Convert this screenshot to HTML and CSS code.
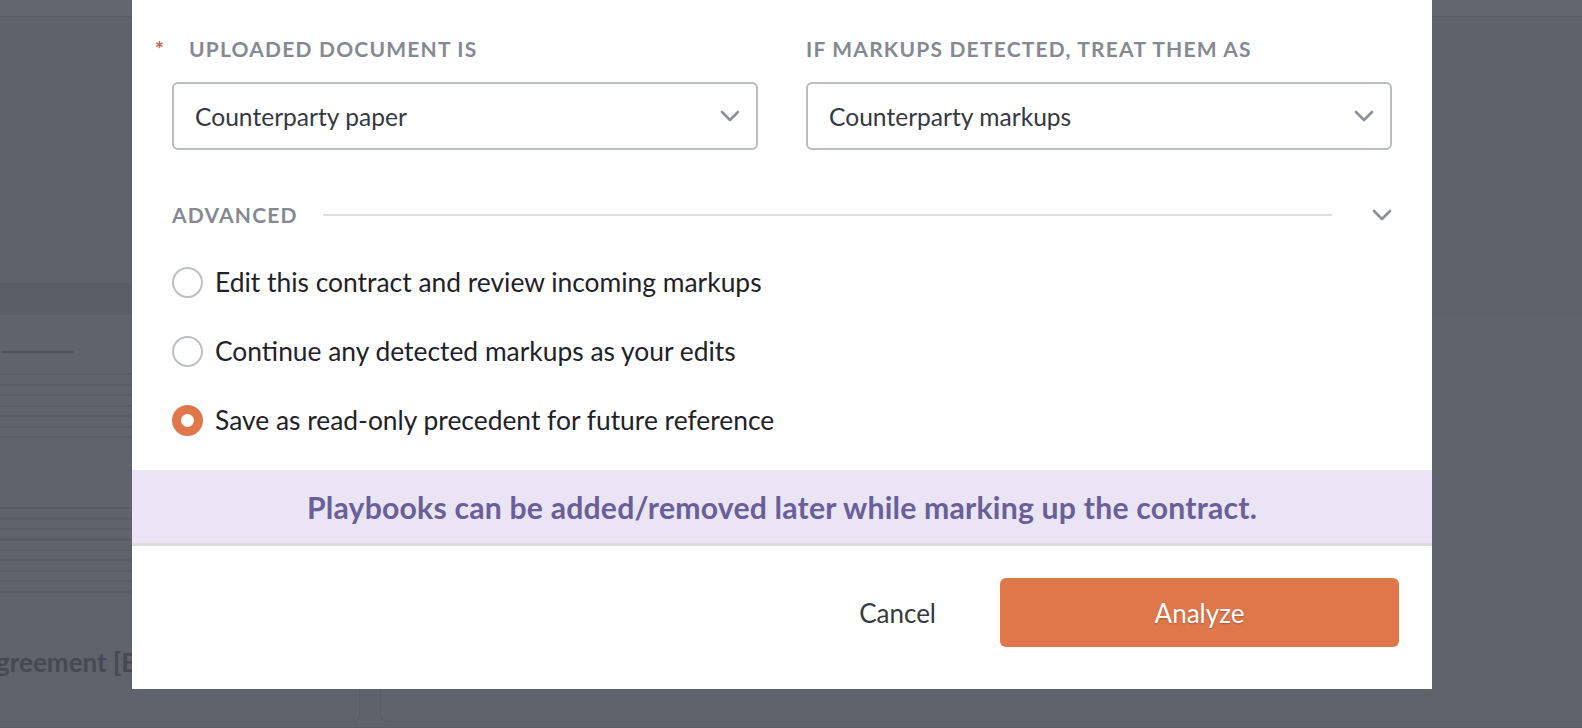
FILE: index.html
```html
<!DOCTYPE html>
<html lang="en">
<head>
    <meta charset="UTF-8">
    <meta name="viewport" content="width=device-width, initial-scale=1.0">
    <title>Analyze Contract</title>
    <link rel="stylesheet" href="styles.css">
</head>
<body>

    <!-- page behind the dialog (dimmed) -->
    <div class="page">
        <div class="topbar"></div>
        <div class="workspace">
            <div class="workspace-head"></div>
            <div class="cards">
                <div class="card card-doc">
                    <div class="doc-rule"></div>
                    <div class="doc-lines"></div>
                    <div class="doc-lines doc-lines-short"></div>
                    <div class="doc-title">Agreement [Beta]</div>
                </div>
                <div class="card card-wide"></div>
            </div>
        </div>
    </div>

    <div class="modal">
        <form class="modal-body" id="analyzeForm">
            <div class="fields">
                <div class="field">
                    <label class="field-label required" for="docType"><span class="req">*</span>Uploaded document is</label>
                    <div class="select" id="docType">
                        <span>Counterparty paper</span>
                        <svg class="chevron" viewBox="0 0 20 12"><path d="M2 2l8 8 8-8"/></svg>
                    </div>
                </div>
                <div class="field">
                    <label class="field-label" for="markupType">If markups detected, treat them as</label>
                    <div class="select" id="markupType">
                        <span>Counterparty markups</span>
                        <svg class="chevron" viewBox="0 0 20 12"><path d="M2 2l8 8 8-8"/></svg>
                    </div>
                </div>
            </div>

            <div class="advanced">
                <span class="field-label">Advanced</span>
                <span class="advanced-line"></span>
                <svg class="chevron" viewBox="0 0 20 12"><path d="M2 2l8 8 8-8"/></svg>
            </div>

            <div class="options">
                <label class="option">
                    <span class="radio"></span>
                    Edit this contract and review incoming markups
                </label>
                <label class="option">
                    <span class="radio"></span>
                    Continue any detected markups as your edits
                </label>
                <label class="option">
                    <span class="radio checked"></span>
                    Save as read-only precedent for future reference
                </label>
            </div>
        </form>

        <div class="notice">Playbooks can be added/removed later while marking up the contract.</div>

        <div class="modal-footer">
            <button type="button" class="btn-cancel">Cancel</button>
            <button type="submit" class="btn-primary" form="analyzeForm">Analyze</button>
        </div>
    </div>

</body>
</html>
```

FILE: styles.css
```css
/* General Styles */
body {
    margin: 0;
    padding: 0;
    font-family: 'Lato', 'Open Sans', sans-serif;
    background-color: #5e626b;
    overflow: hidden;
}

/* Dimmed page behind the dialog */
.page {
    height: 728px;
    display: flex;
    flex-direction: column;
}

.topbar {
    height: 16px;
    background-color: #62666f;
    border-bottom: 1px solid #585c65;
}

.workspace {
    flex: 1;
    display: flex;
    flex-direction: column;
}

.workspace-head {
    width: 1000px;
    height: 266px;
    border-bottom: 32px solid #5a5e67;
}

.cards {
    flex: 1;
    display: flex;
    gap: 20px;
    padding-bottom: 5px;
    border-bottom: 1px solid #585c65;
}

.card {
    border: 1px solid #585c65;
    border-top: none;
    border-radius: 0 0 7px 7px;
    background-color: #5f636c;
}

.card-doc {
    width: 400px;
    margin-left: -42px;
    padding-top: 36px;
}

.card-wide {
    flex: 1;
    margin-right: -20px;
}

.doc-rule {
    width: 72px;
    height: 2px;
    margin-left: 42px;
    background-color: #4e525b;
}

.doc-lines {
    height: 72px;
    margin-top: 20px;
    background: repeating-linear-gradient(to bottom, #595d66 0, #595d66 2px, transparent 2px, transparent 10.5px);
}

.doc-lines-short {
    height: 92px;
    margin-top: 62px;
}

.doc-title {
    margin-top: 47px;
    margin-left: 19px;
    font-size: 26px;
    font-weight: 700;
    color: #454952;
    white-space: nowrap;
}

/* Dialog */
.modal {
    position: fixed;
    top: 0;
    left: 132px;
    width: 1300px;
    height: 689px;
    background-color: #fff;
    display: flex;
    flex-direction: column;
}

.modal-body {
    flex: 1;
    padding: 37px 40px 0;
}

.fields {
    display: grid;
    grid-template-columns: 1fr 1fr;
    column-gap: 48px;
}

.field-label {
    display: block;
    font-size: 21px;
    line-height: 24px;
    font-weight: 700;
    letter-spacing: 1.2px;
    text-transform: uppercase;
    color: #868991;
    margin-bottom: 21px;
}

.field-label.required {
    display: flex;
    margin-left: -17px;
}

.req {
    width: 34px;
    color: #d4574a;
    font-size: 21px;
}

.select {
    height: 68px;
    box-sizing: border-box;
    border: 2px solid #b9bcc1;
    border-radius: 6px;
    padding: 0 16px 0 21px;
    display: flex;
    align-items: center;
    justify-content: space-between;
    font-size: 24.6px;
    color: #363941;
}

.chevron {
    width: 20px;
    height: 12px;
    fill: none;
    stroke: #8d9098;
    stroke-width: 2.6;
    stroke-linecap: round;
    stroke-linejoin: round;
}

.advanced {
    display: flex;
    align-items: center;
    margin-top: 53px;
}

.advanced .field-label {
    margin-bottom: 0;
}

.advanced-line {
    flex: 1;
    height: 2px;
    margin: 0 40px 0 25px;
    background-color: #dedede;
}

.options {
    display: flex;
    flex-direction: column;
    gap: 39px;
    margin-top: 40px;
}

.option {
    display: flex;
    align-items: center;
    gap: 12px;
    height: 30px;
    font-size: 26.4px;
    color: #1f2228;
}

.radio {
    width: 31px;
    height: 31px;
    box-sizing: border-box;
    border: 2px solid #bcc0c4;
    border-radius: 50%;
}

.radio.checked {
    border: 9px solid #e0774b;
    background-color: #fff;
}

.notice {
    height: 73px;
    display: flex;
    align-items: center;
    justify-content: center;
    background-color: #e9e5f4;
    border-bottom: 3px solid #dcdce0;
    font-size: 30.2px;
    font-weight: 700;
    letter-spacing: 0.2px;
    color: #6a5f98;
}

.modal-footer {
    display: flex;
    justify-content: flex-end;
    align-items: center;
    padding: 32px 33px 42px;
}

button {
    font-family: 'Lato', 'Open Sans', sans-serif;
    font-size: 26px;
    border: none;
    cursor: pointer;
}

.btn-cancel {
    background: none;
    color: #363941;
    margin-right: 64px;
    padding: 0;
}

.btn-primary {
    width: 399px;
    height: 69px;
    border-radius: 6px;
    background-color: #e0774b;
    color: #fff;
    text-shadow: 0 1px 2px rgba(0, 0, 0, 0.25);
}
```
